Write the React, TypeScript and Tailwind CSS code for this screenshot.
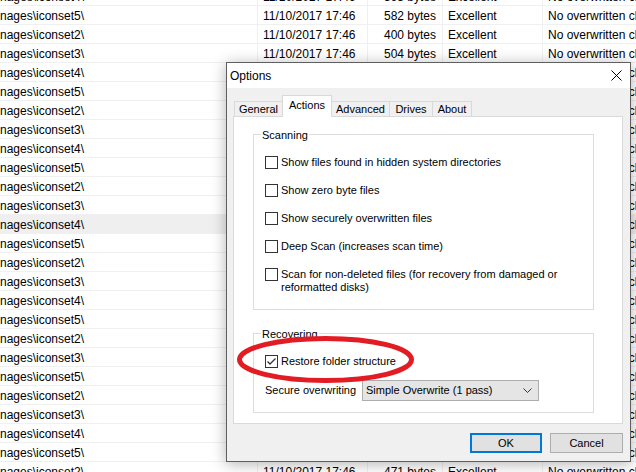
const font = "font-['Liberation_Sans',Arial,sans-serif]";

const rows: [string, string][] = [
  ["4", "593"], ["5", "582"], ["2", "400"], ["3", "504"], ["4", "611"],
  ["5", "488"], ["2", "402"], ["3", "515"], ["4", "597"], ["5", "580"],
  ["2", "398"], ["3", "506"], ["4", "612"], ["5", "584"], ["2", "401"],
  ["3", "503"], ["4", "609"], ["5", "586"], ["2", "399"], ["3", "507"],
  ["5", "583"], ["2", "402"], ["3", "505"], ["4", "610"], ["5", "581"],
  ["2", "471"],
];

function Check({ checked }: { checked?: boolean }) {
  return (
    <span className="w-[13px] h-[13px] shrink-0 border border-[#333333] bg-white flex items-center justify-center">
      {checked && (
        <svg width="11" height="11" viewBox="0 0 11 11">
          <polyline points="1.5,5.5 4,8 9.5,2.5" fill="none" stroke="#333333" strokeWidth="1.3" />
        </svg>
      )}
    </span>
  );
}

function Option({ children, checked }: { children: React.ReactNode; checked?: boolean }) {
  return (
    <div className="flex items-start gap-[3px]">
      <Check checked={checked} />
      <span className="leading-[13px] whitespace-nowrap">{children}</span>
    </div>
  );
}

export default function App() {
  return (
    <div className={`relative w-[636px] h-[472px] overflow-hidden bg-white text-[12px] text-black ${font}`}>
      {/* file list behind the dialog */}
      <div className="mt-[-13px]">
        {rows.map(([set, size], i) => (
          <div
            key={i}
            className={`flex h-[19px] border-b border-[#f0f0f0] leading-[18px] whitespace-nowrap ${i === 12 ? "bg-[#efefef]" : ""}`}
          >
            <div className="w-[258px] shrink-0 border-r border-[#f0f0f0] pt-[1px]">nages\iconset{set}\</div>
            <div className="w-[110px] shrink-0 border-r border-[#f0f0f0] pl-[5px] pt-[1px]">11/10/2017 17:46</div>
            <div className="w-[75px] shrink-0 border-r border-[#f0f0f0] pr-[6px] text-right pt-[1px]">{size} bytes</div>
            <div className="w-[100px] shrink-0 border-r border-[#f0f0f0] pl-[5px] pt-[1px]">Excellent</div>
            <div className="pl-[5px] pt-[1px]">No overwritten clusters detected</div>
          </div>
        ))}
      </div>

      {/* Options dialog */}
      <div className="absolute left-[226px] top-[62px] w-[405px] h-[400px] border border-[#5f5f5f] bg-[#f0f0f0] flex flex-col shadow-[0_2px_14px_rgba(0,0,0,0.3)]">
        <div className="h-[25px] shrink-0 bg-white flex items-center justify-between pl-[3px] pr-[8px]">
          <span className="pt-[1px]">Options</span>
          <svg width="11" height="11" viewBox="0 0 11 11">
            <path d="M0.5 0.5 L10.5 10.5 M10.5 0.5 L0.5 10.5" stroke="#000" strokeWidth="1" />
          </svg>
        </div>

        <div className="flex flex-col pl-[6px] pt-[7px] text-[11px]">
          <div className="flex items-end h-[21px] ml-[1px] relative z-10">
            <div className="w-[48px] h-[15px] border-l border-t border-[#d9d9d9] text-center leading-[14px]">General</div>
            <div className="w-[50px] h-[22px] border-l border-t border-r border-[#d9d9d9] bg-white text-center leading-[18px] mb-[-1px]">Actions</div>
            <div className="w-[57px] h-[15px] border-t border-[#d9d9d9] text-center leading-[14px]">Advanced</div>
            <div className="w-[43px] h-[15px] border-l border-t border-[#d9d9d9] text-center leading-[14px]">Drives</div>
            <div className="w-[40px] h-[15px] border-l border-t border-r border-[#d9d9d9] text-center leading-[14px]">About</div>
          </div>

          <div className="w-[390px] h-[308px] border border-[#d9d9d9] bg-white pl-[19px] pt-[17px]">
            <div className="w-[341px] border border-[#dcdcdc] pl-[11px] pb-[15px]">
              <div className="-mt-[7px] ml-[-4px] px-[1px] bg-white w-fit leading-[14px]">Scanning</div>
              <div className="mt-[14px] flex flex-col gap-[15px]">
                <Option>Show files found in hidden system directories</Option>
                <Option>Show zero byte files</Option>
                <Option>Show securely overwritten files</Option>
                <Option>Deep Scan (increases scan time)</Option>
                <Option>
                  Scan for non-deleted files (for recovery from damaged or
                  <br />
                  reformatted disks)
                </Option>
              </div>
            </div>

            <div className="w-[341px] mt-[23px] border border-[#dcdcdc] pl-[11px] pb-[11px]">
              <div className="-mt-[7px] ml-[-4px] px-[1px] bg-white w-fit leading-[14px]">Recovering</div>
              <div className="mt-[14px]">
                <Option checked>Restore folder structure</Option>
              </div>
              <div className="mt-[12px] flex items-center">
                <span className="w-[97px] shrink-0 whitespace-nowrap">Secure overwriting</span>
                <div className="w-[177px] h-[21px] border border-[#adadad] bg-[#e5e5e5] flex items-center justify-between pl-[3px] pr-[6px]">
                  <span className="whitespace-nowrap">Simple Overwrite (1 pass)</span>
                  <svg width="9" height="6" viewBox="0 0 9 6">
                    <polyline points="0.5,0.5 4.5,4.5 8.5,0.5" fill="none" stroke="#333" strokeWidth="1" />
                  </svg>
                </div>
              </div>
            </div>
          </div>
        </div>

        <div className="flex justify-end gap-[8px] pr-[7px] mt-[9px] text-[11px]">
          <button className="w-[72px] h-[20px] border-2 border-[#0078d7] bg-[#e1e1e1] leading-[16px]">OK</button>
          <button className="w-[73px] h-[20px] border border-[#adadad] bg-[#e1e1e1] leading-[18px]">Cancel</button>
        </div>
      </div>

      {/* red annotation ellipse */}
      <svg className="absolute left-[235px] top-[334px]" width="182" height="52" viewBox="0 0 182 52">
        <ellipse cx="90.5" cy="25.5" rx="86" ry="21" fill="none" stroke="#e31b23" strokeWidth="5" />
      </svg>
    </div>
  );
}
